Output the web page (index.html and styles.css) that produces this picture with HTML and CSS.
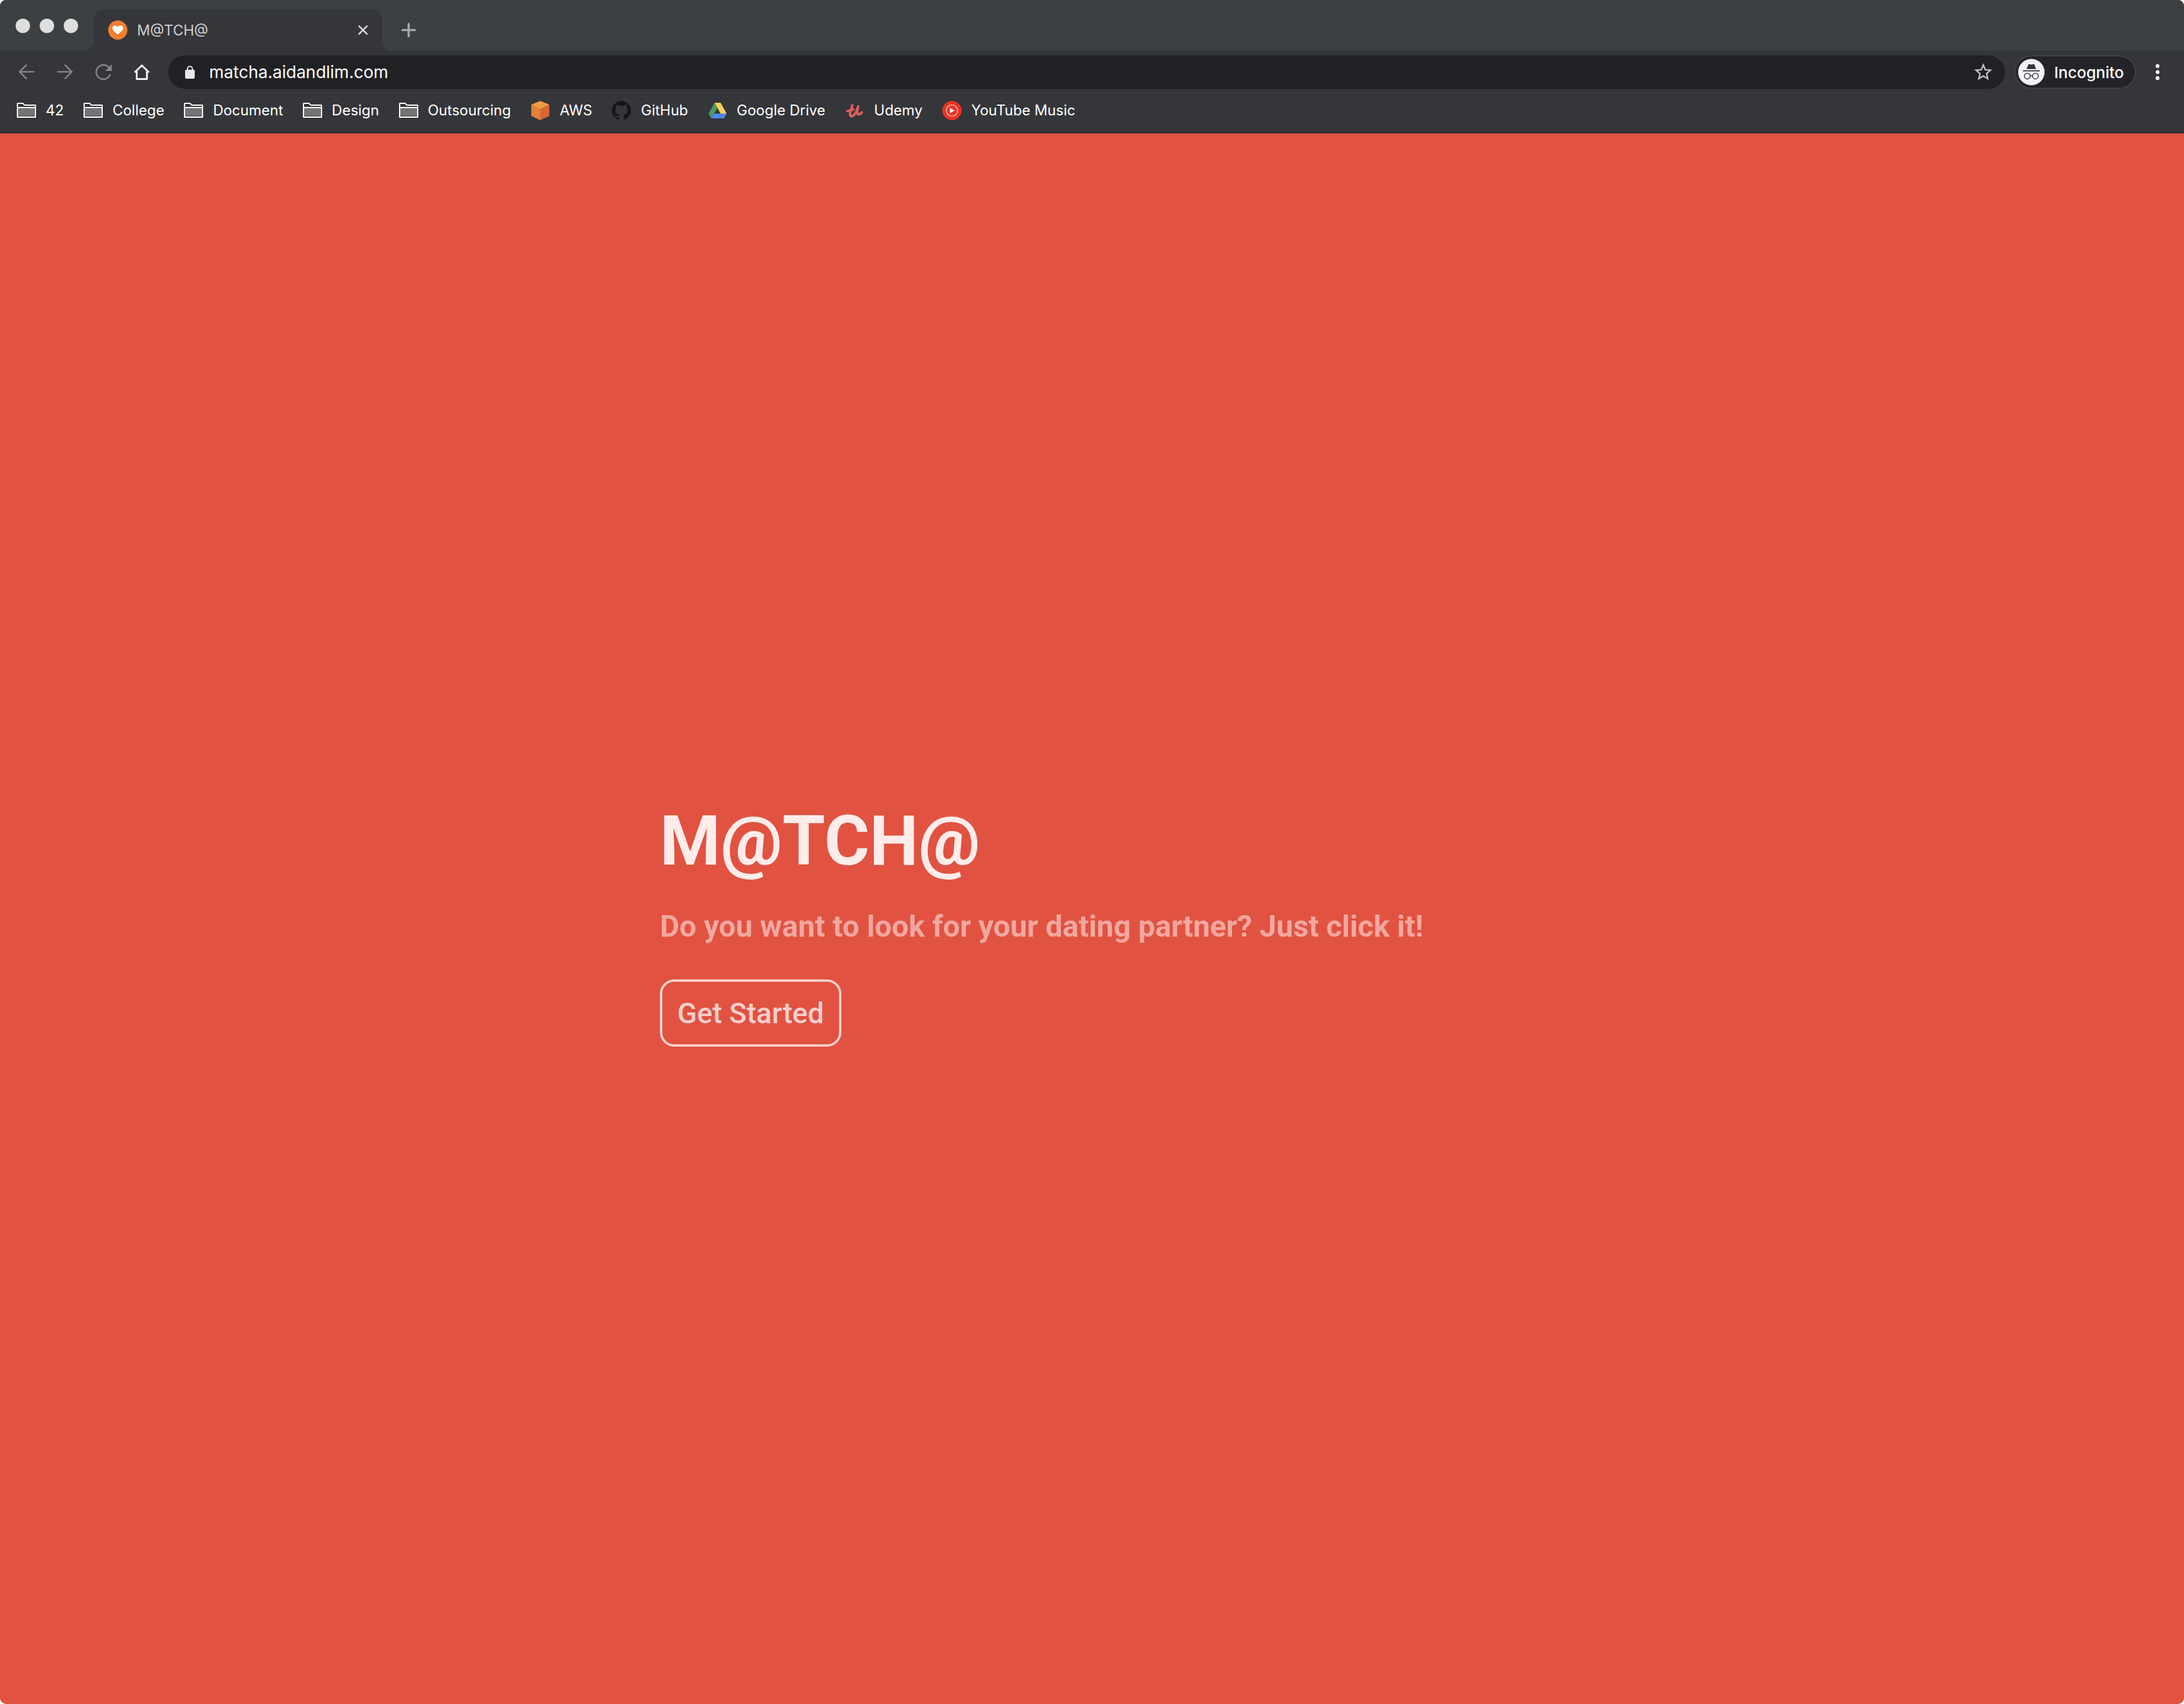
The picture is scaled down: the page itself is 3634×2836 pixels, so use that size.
FILE: index.html
```html
<!DOCTYPE html>
<html lang="en">
<head>
<meta charset="utf-8">
<meta name="viewport" content="width=device-width, initial-scale=1">
<title>M@TCH@</title>
<link rel="stylesheet" href="styles.css">
</head>
<body>
<div class="window">
  <header class="chrome">
    <div class="tab-strip">
      <div class="lights"><span class="light"></span><span class="light"></span><span class="light"></span></div>
      <div class="tab">
        <svg class="icon-32" viewBox="0 0 32 32" aria-hidden="true"><circle cx="16" cy="16" r="16" fill="#ee7f31"/><path fill="#fff" d="M16 23.500C10 18.500 7 16 7 12.800C7 10.300 9 8.500 11.400 8.500C13.500 8.500 15 9.600 16 11C17 9.600 18.500 8.500 20.600 8.500C23 8.500 25 10.300 25 12.800C25 16 22 18.500 16 23.500Z"/></svg>
        <span class="tab-title">M@TCH@</span>
        <button class="tab-close" type="button" aria-label="Close tab"><svg width="16" height="16" viewBox="0 0 16 16"><path d="M1.500 1.500L14.500 14.500M14.500 1.500L1.500 14.500" stroke="#d5d6d8" stroke-width="2.600" stroke-linecap="round"/></svg></button>
      </div>
      <button class="new-tab" type="button" aria-label="New tab"><svg width="24" height="24" viewBox="0 0 24 24"><path d="M12 1.800V22.200M1.800 12H22.200" stroke="#a6a9ac" stroke-width="3.600" stroke-linecap="round"/></svg></button>
    </div>

    <div class="toolbar">
      <div class="nav-buttons">
        <button class="tool" type="button" aria-label="Back"><svg width="28" height="28" viewBox="0 0 28 28"><path d="M26 13.500H3M13.500 2.500L2.500 13.500L13.500 24.500" fill="none" stroke="#85868a" stroke-width="2.600" stroke-linecap="round"/></svg></button>
        <button class="tool" type="button" aria-label="Forward"><svg width="28" height="28" viewBox="0 0 28 28"><path d="M2 13.500H25M14.500 2.500L25.500 13.500L14.500 24.500" fill="none" stroke="#85868a" stroke-width="2.600" stroke-linecap="round"/></svg></button>
        <button class="tool" type="button" aria-label="Reload"><svg width="28" height="28" viewBox="0 0 28 28"><path d="M23 6.200A11.900 11.900 0 1 0 25 18.500" fill="none" stroke="#85868a" stroke-width="2.600" stroke-linecap="round"/><path d="M28 1V12H17Z" fill="#85868a"/></svg></button>
        <button class="tool" type="button" aria-label="Home"><svg width="28" height="28" viewBox="0 0 28 28"><path d="M2 14.500L14 3L26 14.500" fill="none" stroke="#f4f4f5" stroke-width="3"/><path d="M5.500 12V25.500H22.500V12" fill="none" stroke="#f4f4f5" stroke-width="3" stroke-linejoin="round"/></svg></button>
      </div>
      <div class="omnibox">
        <svg class="lock" width="16" height="22" viewBox="0 0 16 22" aria-hidden="true"><path d="M4 9V5.500A4 4 0 0 1 12 5.500V9" fill="none" stroke="#e8e8e9" stroke-width="2"/><rect x="0" y="7" width="16" height="15" rx="2" fill="#e8e8e9"/></svg>
        <input class="address" type="text" aria-label="Address" value="matcha.aidandlim.com">
        <button class="tool" type="button" aria-label="Bookmark this page"><svg width="36" height="36" viewBox="0 0 24 24"><path fill="#c0c1c3" d="M22 9.240l-7.190-.62L12 2 9.190 8.630 2 9.240l5.460 4.730L5.820 21 12 17.270 18.180 21l-1.630-7.030L22 9.240zM12 15.400l-3.760 2.270 1-4.280-3.320-2.880 4.380-.38L12 6.100l1.710 4.040 4.380.38-3.320 2.880 1 4.280L12 15.400z"/></svg></button>
      </div>
      <div class="profile-area">
        <button class="profile" type="button">
          <svg width="44" height="44" viewBox="0 0 44 44" aria-hidden="true"><circle cx="22" cy="22" r="22" fill="#f1f3f4"/><path fill="#35363a" d="M14 17L17 9.500Q17.500 8.500 18.500 8.700L22 9.500L25.500 8.700Q26.500 8.500 27 9.500L30 17ZM8 19H36V20.700H8Z"/><g fill="none" stroke="#35363a" stroke-width="1.500"><circle cx="15.200" cy="28.700" r="4.800"/><circle cx="28.800" cy="28.700" r="4.800"/><path d="M20 28.500Q22 27 24 28.500"/></g></svg>
          Incognito
        </button>
        <button class="tool" type="button" aria-label="Menu"><svg width="8" height="28" viewBox="0 0 8 28"><g fill="#f4f4f5"><circle cx="4" cy="4" r="3.200"/><circle cx="4" cy="14" r="3.200"/><circle cx="4" cy="24" r="3.200"/></g></svg></button>
      </div>
    </div>

    <nav class="bookmarks" aria-label="Bookmarks">
      <svg class="defs" width="0" height="0" aria-hidden="true"><symbol id="folder" viewBox="0 0 32 32"><path d="M1 11H31V27H1Z" fill="#747476"/><path d="M2 24H30V26H2Z" fill="#626264"/><path d="M1 27V4.500L1.500 4H9.500Q10.500 4 11.200 5L12.500 6.500Q13 7 14 7H30.500L31 7.500V27ZM1 11H31" fill="none" stroke="#fff" stroke-width="2" stroke-linejoin="round"/></symbol></svg>
      <a class="bookmark" href="#"><svg class="icon-32"><use href="#folder"/></svg>42</a>
      <a class="bookmark" href="#"><svg class="icon-32"><use href="#folder"/></svg>College</a>
      <a class="bookmark" href="#"><svg class="icon-32"><use href="#folder"/></svg>Document</a>
      <a class="bookmark" href="#"><svg class="icon-32"><use href="#folder"/></svg>Design</a>
      <a class="bookmark" href="#"><svg class="icon-32"><use href="#folder"/></svg>Outsourcing</a>
      <a class="bookmark" href="#"><svg class="icon-32" viewBox="0 0 32 32"><path fill="#f09c43" d="M16 0L31 6L16 14L1 6Z"/><path fill="#e3823a" d="M1 6L16 14V32L1 25Z"/><path fill="#d96534" d="M31 6L16 14V32L31 25Z"/></svg>AWS</a>
      <a class="bookmark" href="#"><svg class="icon-32" viewBox="0 0 16 16"><path fill="#181717" d="M8 0C3.580 0 0 3.580 0 8c0 3.540 2.290 6.530 5.470 7.590.4.070.55-.17.55-.38 0-.19-.01-.82-.01-1.490-2.010.37-2.530-.49-2.690-.94-.09-.23-.48-.94-.82-1.130-.28-.15-.68-.52-.01-.53.63-.01 1.080.58 1.230.82.72 1.210 1.870.87 2.330.66.07-.52.28-.87.51-1.070-1.780-.2-3.640-.89-3.640-3.950 0-.87.31-1.590.82-2.150-.08-.2-.36-1.020.08-2.120 0 0 .67-.21 2.200.82.64-.18 1.320-.27 2-.27s1.360.09 2 .27c1.530-1.040 2.200-.82 2.200-.82.44 1.100.16 1.920.08 2.120.51.56.82 1.270.82 2.150 0 3.070-1.870 3.750-3.650 3.950.29.25.54.73.54 1.480 0 1.070-.01 1.930-.01 2.200 0 .21.15.46.55.38A8.010 8.010 0 0 0 16 8c0-4.420-3.580-8-8-8z"/></svg>GitHub</a>
      <a class="bookmark" href="#"><svg class="icon-32" viewBox="0 0 32 32"><path fill="#489a5f" d="M11 3L16 11.500L5.500 29L1 21Z"/><path fill="#f8cf5b" d="M11 3H21L31 21H21Z"/><path fill="#4f86ec" d="M10.300 21H31L26.700 29H5.500Z"/></svg>Google Drive</a>
      <a class="bookmark" href="#"><svg class="icon-32" viewBox="0 0 32 32"><path fill="none" stroke="#e05d5b" stroke-width="4" stroke-linecap="round" stroke-linejoin="round" d="M4 17C8 16 11 15 14 14M12 7C11 13 8 19 8.500 23C9.500 28 15 25 18 19C20 15 21 12 22 9C21 14 19.500 19 21 21.500C23 24 26 21 28 19"/></svg>Udemy</a>
      <a class="bookmark" href="#"><svg class="icon-32" viewBox="0 0 32 32"><circle cx="16" cy="16" r="16" fill="#e93324"/><circle cx="16" cy="16" r="9.400" fill="none" stroke="#f6b0aa" stroke-width="1.500"/><path fill="#fff" d="M12.500 11.500L20.500 16L12.500 20.500Z"/></svg>YouTube Music</a>
    </nav>
  </header>

  <main class="page">
    <section class="intro">
      <h1 class="title">M@TCH@</h1>
      <p class="tagline">Do you want to look for your dating partner? Just click it!</p>
      <button class="start" type="button">Get Started</button>
    </section>
  </main>
</div>
</body>
</html>
```
FILE: styles.css
```css
* {
  box-sizing: border-box;
}

body {
  margin: 0;
  background: #fff;
  font-family: "Inter", sans-serif;
}

button {
  border: 0;
  padding: 0;
  background: none;
  color: inherit;
  font: inherit;
  cursor: pointer;
}

svg {
  display: block;
  flex: none;
}

.window {
  display: flex;
  flex-direction: column;
  min-height: 100vh;
  border-radius: 10px;
  overflow: hidden;
  background: #e15241;
}

.chrome {
  border-bottom: 2px solid #28292c;
  background: #35363a;
  color: #fff;
}

.icon-32 {
  width: 32px;
  height: 32px;
}

/* Tab strip */
.tab-strip {
  display: flex;
  align-items: flex-end;
  height: 84px;
  padding-left: 26px;
  background: #3c4043;
}

.lights {
  display: flex;
  align-self: center;
  gap: 16px;
  width: 130px;
  padding-top: 2px;
}

.light {
  width: 24px;
  height: 24px;
  border-radius: 50%;
  background: #dedede;
}

.tab {
  position: relative;
  display: flex;
  align-items: center;
  gap: 16px;
  width: 480px;
  height: 68px;
  padding: 0 24px;
  border-radius: 16px 16px 0 0;
  background: #35363a;
}

.tab::before,
.tab::after {
  content: "";
  position: absolute;
  bottom: 0;
  width: 16px;
  height: 16px;
}

.tab::before {
  right: 100%;
  background: radial-gradient(circle at 0 0, transparent 16px, #35363a 16px);
}

.tab::after {
  left: 100%;
  background: radial-gradient(circle at 100% 0, transparent 16px, #35363a 16px);
}

.tab-title {
  flex: 1;
  color: #cfd0d2;
  font-size: 24px;
}

.new-tab {
  display: grid;
  place-items: center;
  width: 56px;
  height: 68px;
  margin-left: 16px;
}

/* Toolbar */
.toolbar {
  display: flex;
  align-items: center;
  gap: 16px;
  height: 72px;
  padding: 0 16px;
}

.nav-buttons,
.profile-area {
  display: flex;
  gap: 8px;
}

.tool {
  display: grid;
  place-items: center;
  width: 56px;
  height: 56px;
}

.omnibox {
  display: flex;
  flex: 1;
  align-items: center;
  gap: 24px;
  height: 56px;
  padding: 0 8px 0 28px;
  border-radius: 28px;
  background: #202124;
}

.address {
  flex: 1;
  min-width: 0;
  padding: 0;
  border: 0;
  outline: 0;
  background: none;
  color: #fff;
  font: 28px "Inter", sans-serif;
}

.profile {
  display: flex;
  align-items: center;
  gap: 16px;
  height: 56px;
  padding: 0 18px 0 4px;
  border: 2px solid #414246;
  border-radius: 28px;
  background: #242428;
  font-size: 26px;
  font-weight: 500;
}

/* Bookmarks bar */
.bookmarks {
  display: flex;
  align-items: center;
  gap: 33px;
  padding: 12px 28px 20px;
}

.defs {
  position: absolute;
}

.bookmark {
  display: flex;
  align-items: center;
  gap: 16px;
  color: #fff;
  font-size: 24px;
  line-height: 32px;
  text-decoration: none;
  white-space: nowrap;
}

/* Landing page */
.page {
  display: flex;
  flex: 1;
  align-items: center;
  justify-content: center;
}

.intro {
  width: 100%;
  max-width: 1438px;
}

.title {
  margin: 0 0 28px;
  color: #fdecea;
  font: 700 115px/168px "Roboto", sans-serif;
}

.tagline {
  margin: 0 0 58px;
  color: #f2a79f;
  font: 700 50px/60px "Roboto", sans-serif;
}

.start {
  height: 112px;
  padding: 0 25px;
  border: 4px solid #f7cfcb;
  border-radius: 24px;
  color: #f7cfcb;
  font: 500 48px "Roboto", sans-serif;
}
```
